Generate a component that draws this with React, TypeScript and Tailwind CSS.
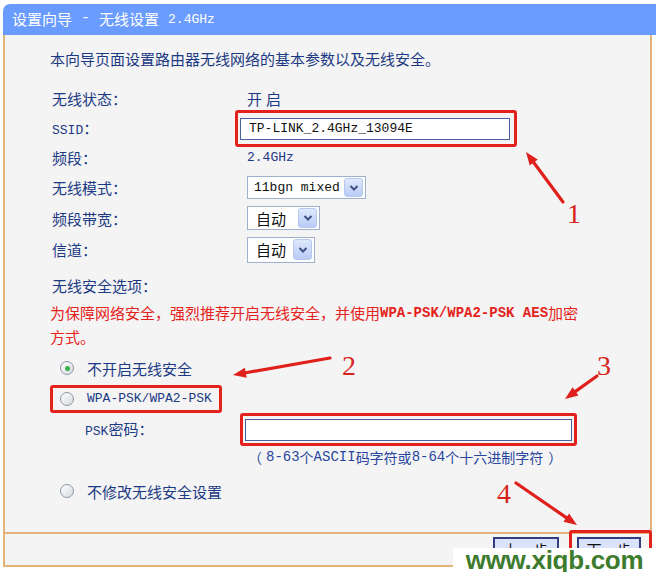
import React from "react";

const cjk = "font-['Noto_Sans_CJK_SC',sans-serif]";
const mono = "font-['Liberation_Mono','Noto_Sans_CJK_SC',monospace]";

type RowProps = {
  label: React.ReactNode;
  h: string;
  children?: React.ReactNode;
};

const Row = ({ label, h, children }: RowProps) => (
  <div className={`flex items-center ${h}`}>
    <div className="w-[195px] shrink-0 text-[15px] leading-none text-[#1c3a84]">
      {label}
    </div>
    <div className="flex items-center">{children}</div>
  </div>
);

const Chevron = ({ size }: { size: string }) => (
  <span
    className={`${size} flex items-center justify-center rounded-[3px] border border-[#b7c8ee] bg-gradient-to-b from-[#dfe8fd] to-[#b9ccf6]`}
  >
    <svg width="10" height="8" viewBox="0 0 10 8">
      <path d="M1.5 2 L5 5.5 L8.5 2" fill="none" stroke="#3d5386" strokeWidth="2" />
    </svg>
  </span>
);

type SelectProps = {
  text: string;
  box: string;
  btn: string;
  textCls: string;
};

const Select = ({ text, box, btn, textCls }: SelectProps) => (
  <div
    className={`${box} flex items-center justify-between border border-[#9fb0cc] bg-white pr-[2px]`}
  >
    <span className={`${textCls} text-[#111]`}>{text}</span>
    <Chevron size={btn} />
  </div>
);

const Radio = ({ checked }: { checked?: boolean }) => (
  <span className="flex h-[14px] w-[14px] items-center justify-center rounded-full border border-[#8d97a6] bg-gradient-to-br from-white to-[#d5d9df]">
    {checked && <span className="h-[5px] w-[5px] rounded-full bg-[#34b248]" />}
  </span>
);

type ArrowProps = { x1: number; y1: number; x2: number; y2: number };

const Arrow = ({ x1, y1, x2, y2 }: ArrowProps) => {
  const len = Math.hypot(x2 - x1, y2 - y1);
  const ux = (x2 - x1) / len;
  const uy = (y2 - y1) / len;
  const bx = x2 - ux * 13;
  const by = y2 - uy * 13;
  const pts = `${x2},${y2} ${bx - uy * 5},${by + ux * 5} ${bx + uy * 5},${by - ux * 5}`;
  return (
    <g>
      <line x1={x1} y1={y1} x2={bx} y2={by} stroke="#e0201c" strokeWidth="3.2" strokeLinecap="round" />
      <polygon points={pts} fill="#e0201c" />
    </g>
  );
};

const App = () => {
  return (
    <div className={`relative h-[572px] w-[656px] overflow-hidden bg-white ${cjk}`}>
      <div className="ml-[3px] pt-[4px]">
        {/* title bar */}
        <div className="flex h-[31px] items-center gap-[9px] rounded-tl-[7px] bg-[#6a9bff] pl-[9px] text-[15px] text-white">
          <span>设置向导</span>
          <span className={mono}>-</span>
          <span>无线设置</span>
          <span className={`${mono} text-[13px]`}>2.4GHz</span>
        </div>

        {/* body */}
        <div className="flex h-[497px] w-[649px] flex-col border-x-2 border-[#e3b47a] bg-[#f4f4f4] pl-[47px]">
          <div className="-ml-[2px] mt-[13px] flex h-[20px] items-center text-[15px] leading-none text-[#1c3a84]">
            本向导页面设置路由器无线网络的基本参数以及无线安全。
          </div>

          <div className="mt-[15px]">
            <Row label="无线状态：" h="h-[30px]">
              <span className="text-[15px] leading-none tracking-[4px] text-[#1c3a84]">开启</span>
            </Row>
            <Row label={<span><span className={`${mono} text-[13px]`}>SSID</span>：</span>} h="h-[30px]">
              <div className="-ml-[12px] rounded-[3px] border-[3px] border-[#e3211d] pb-[4px] pl-[2px] pr-[4px] pt-[5px]">
                <div className="flex h-[22px] w-[270px] items-center border border-[#4a63a0] bg-white pl-[8px]">
                  <span className={`${mono} text-[13px] text-[#111]`}>TP-LINK_2.4GHz_13094E</span>
                </div>
              </div>
            </Row>
            <Row label="频段：" h="h-[29px]">
              <span className={`${mono} text-[13px] text-[#1c3a84]`}>2.4GHz</span>
            </Row>
            <Row label="无线模式：" h="h-[31px]">
              <Select
                text="11bgn mixed"
                box="h-[23px] w-[119px] pl-[6px]"
                btn="h-[19px] w-[19px]"
                textCls={`${mono} text-[13px]`}
              />
            </Row>
            <Row label="频段带宽：" h="h-[30px]">
              <Select
                text="自动"
                box="h-[24px] w-[73px] pl-[8px]"
                btn="h-[20px] w-[19px]"
                textCls="text-[15px] leading-none"
              />
            </Row>
            <Row label="信道：" h="h-[33px]">
              <Select
                text="自动"
                box="h-[26px] w-[68px] pl-[8px]"
                btn="h-[21px] w-[19px]"
                textCls="text-[15px] leading-none"
              />
            </Row>
          </div>

          <div className="mt-[9px] flex h-[20px] items-center text-[15px] leading-none text-[#1c3a84]">
            无线安全选项：
          </div>
          <div className="-ml-[2px] mt-[6px] h-[48px] text-[15px] leading-[24px] text-[#e5231c]">
            <div className="flex h-[24px] items-center">
              为保障网络安全，强烈推荐开启无线安全，并使用
              <span className={`${mono} text-[14px] font-bold leading-none`}>WPA-PSK/WPA2-PSK AES</span>
              加密
            </div>
            <div className="flex h-[24px] items-center">方式。</div>
          </div>

          <div className="mt-[4px] flex h-[30px] items-center gap-[13px] pl-[8px] text-[15px] leading-none text-[#1c3a84]">
            <Radio checked />
            <span>不开启无线安全</span>
          </div>
          <div className="mt-[1px] flex h-[30px] items-center">
            <div className="-ml-[2px] flex h-[28px] items-center gap-[13px] rounded-[3px] border-[3px] border-[#e3211d] pl-[7px] pr-[7px]">
              <Radio />
              <span className={`${mono} text-[13px] text-[#1c3a84]`}>WPA-PSK/WPA2-PSK</span>
            </div>
          </div>
          <Row label={<span className="pl-[33px]"><span className={`${mono} text-[13px]`}>PSK</span>密码：</span>} h="h-[30px]">
            <div className="-ml-[7px] rounded-[3px] border-[3px] border-[#e3211d] pb-[2px] pl-[2px] pr-[2px] pt-[3px]">
              <div className="h-[22px] w-[327px] border border-[#4a63a0] bg-white" />
            </div>
          </Row>
          <div className="mt-[3px] flex h-[20px] items-center pl-[196px] text-[14px] leading-none text-[#2846a0]">
            <span>（</span>
            <span className={`${mono} ml-[4px]`}>8-63</span>个<span className={mono}>ASCII</span>码字符或<span className={mono}>8-64</span>个十六进制字符
            <span className="ml-[5px]">）</span>
          </div>

          <div className="mt-[9px] flex h-[30px] items-center gap-[13px] pl-[8px] text-[15px] leading-none text-[#1c3a84]">
            <Radio />
            <span>不修改无线安全设置</span>
          </div>
        </div>

        {/* footer */}
        <div className="flex h-[35px] w-[649px] items-start justify-end gap-[18px] border-2 border-[#e3b47a] bg-[#f4f4f4] pr-[9px] pt-[3px]">
          <button className="h-[24px] w-[66px] border-2 border-[#2f3f80] bg-[#dbe2fb] text-[15px] leading-none text-[#111]">
            上一步
          </button>
          <button className="h-[24px] w-[64px] border-2 border-[#2f3f80] bg-[#dbe2fb] text-[15px] leading-none text-[#111]">
            下一步
          </button>
        </div>
      </div>

      {/* annotations */}
      <div className="absolute left-[569px] top-[530px] h-[46px] w-[83px] rounded-[3px] border-[3px] border-[#e3211d]" />
      <svg className="pointer-events-none absolute left-0 top-0" width="656" height="572">
        <Arrow x1={563} y1={202} x2={526} y2={152} />
        <Arrow x1={330} y1={358} x2={233} y2={375} />
        <Arrow x1={597} y1={376} x2={565} y2={399} />
        <Arrow x1={516} y1={483} x2={577} y2={525} />
      </svg>
      <span className="absolute left-[567px] top-[200px] font-['Liberation_Serif',serif] text-[28px] leading-none text-[#d8231d]">1</span>
      <span className="absolute left-[342px] top-[352px] font-['Liberation_Serif',serif] text-[28px] leading-none text-[#d8231d]">2</span>
      <span className="absolute left-[597px] top-[352px] font-['Liberation_Serif',serif] text-[28px] leading-none text-[#d8231d]">3</span>
      <span className="absolute left-[497px] top-[480px] font-['Liberation_Serif',serif] text-[28px] leading-none text-[#d8231d]">4</span>

      <div className="absolute left-[453px] top-[548px] flex h-[24px] w-[203px] items-center justify-center bg-white">
        <span className="font-['Liberation_Sans',sans-serif] text-[26px] font-bold leading-none tracking-[-0.3px] text-[#3d7c2c]">
          www.xiqb.com
        </span>
      </div>
    </div>
  );
};

export default App;
